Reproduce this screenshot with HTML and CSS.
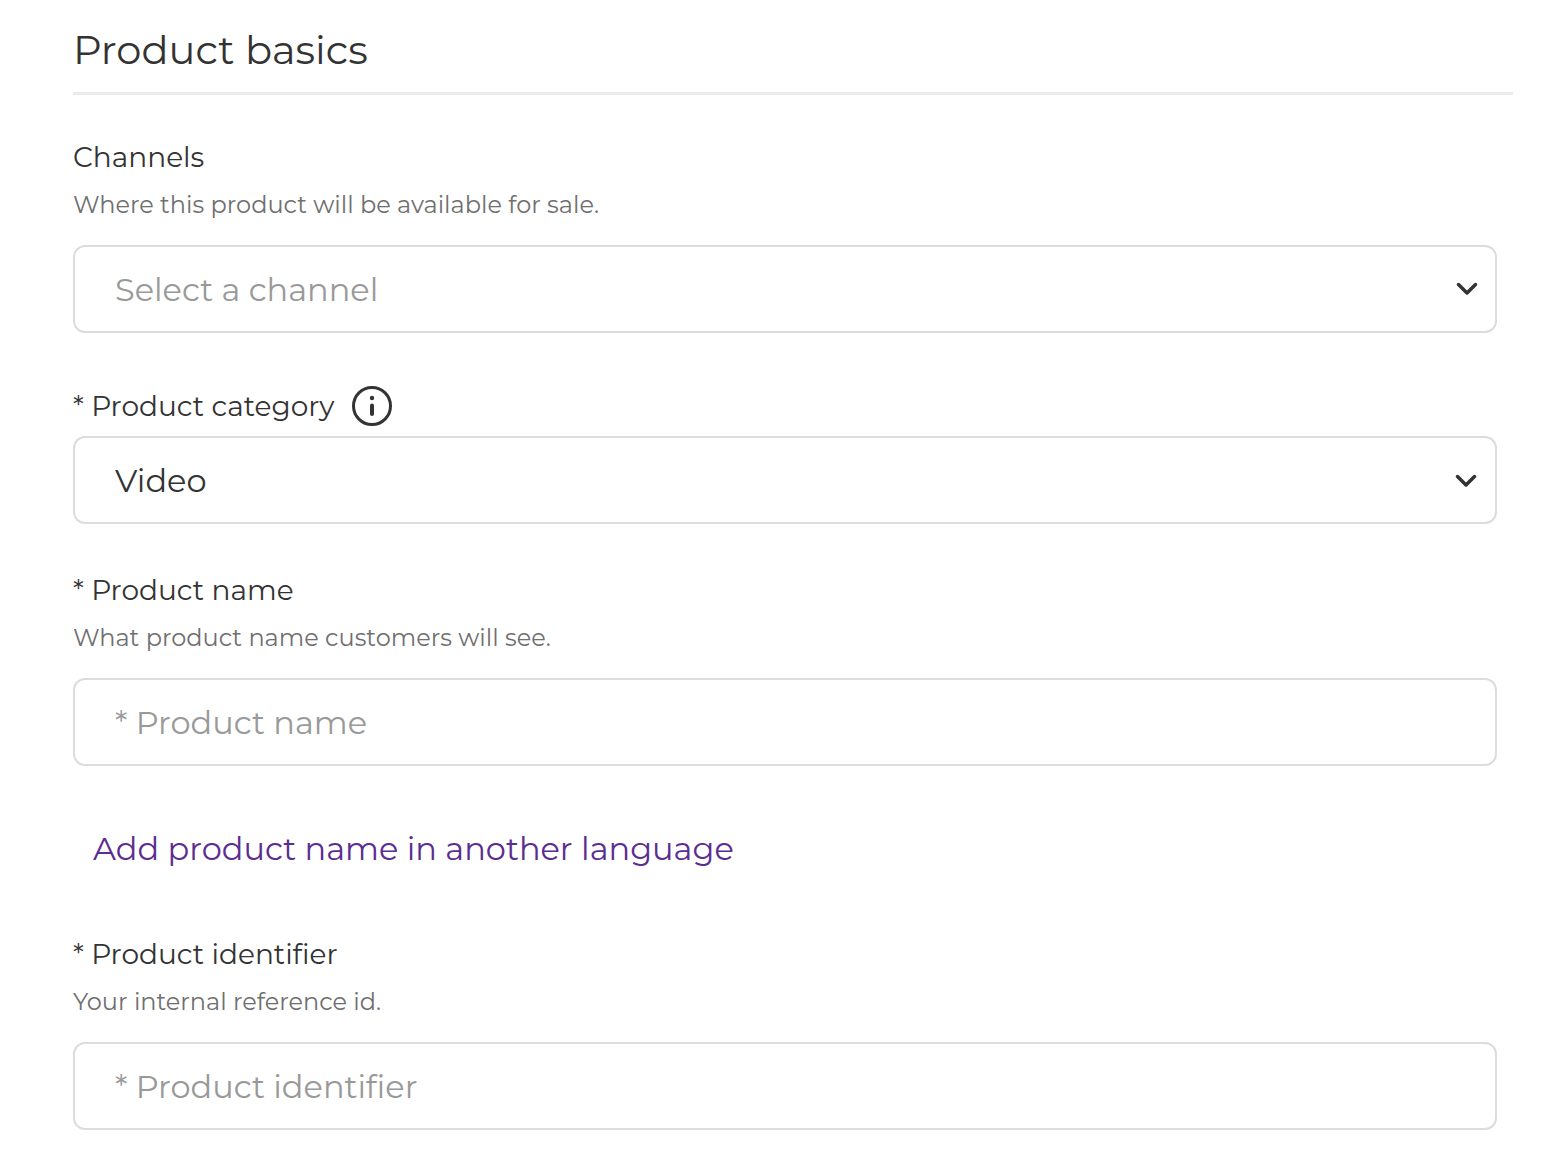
FILE: index.html
```html
<!DOCTYPE html>
<html lang="en">
<head>
<meta charset="utf-8">
<meta name="viewport" content="width=device-width, initial-scale=1">
<title>Product basics</title>
<link rel="stylesheet" href="styles.css">
</head>
<body>
<form class="product-form">
  <h1 class="section-title">Product basics</h1>

  <div class="field">
    <label class="label" for="channels">Channels</label>
    <p class="hint" id="channels-hint">Where this product will be available for sale.</p>
    <div class="select-box">
      <select class="control is-empty" id="channels" aria-describedby="channels-hint">
        <option value="">Select a channel</option>
      </select>
      <svg class="chevron" viewBox="0 0 24 24" aria-hidden="true"><path d="M3.500 7.500l8.500 8.500L20.500 7.500"/></svg>
    </div>
  </div>

  <div class="field">
    <div class="label-row">
      <label class="label" for="category">* Product category</label>
      <button class="info" type="button" aria-label="About product category">
        <svg class="info-icon" viewBox="0 0 40 40" aria-hidden="true"><circle class="ring" cx="20" cy="20" r="18.500"/><circle cx="20" cy="12" r="2.200"/><path class="stem" d="M20 19.500v8.500"/></svg>
      </button>
    </div>
    <div class="select-box">
      <select class="control" id="category">
        <option>Video</option>
      </select>
      <svg class="chevron" viewBox="0 0 24 24" aria-hidden="true"><path d="M2.500 8.500l8.500 8.500L19.500 8.500"/></svg>
    </div>
  </div>

  <div class="field">
    <label class="label" for="name">* Product name</label>
    <p class="hint" id="name-hint">What product name customers will see.</p>
    <input class="control" id="name" type="text" placeholder="* Product name" aria-describedby="name-hint">
  </div>

  <button class="add-language" type="button">Add product name in another language</button>

  <div class="field">
    <label class="label" for="identifier">* Product identifier</label>
    <p class="hint" id="identifier-hint">Your internal reference id.</p>
    <input class="control" id="identifier" type="text" placeholder="* Product identifier" aria-describedby="identifier-hint">
  </div>
</form>
</body>
</html>
```

FILE: styles.css
```css
* {
  box-sizing: border-box;
}

body {
  margin: 0;
  background: #fff;
  color: #333;
  font-family: Gotham, Montserrat, "Noto Sans", sans-serif;
}

.product-form {
  padding: 20px 47px 44px 73px;
}

.section-title {
  margin: 0 0 44px;
  padding-bottom: 12px;
  border-bottom: 3px solid #ebebeb;
  font-size: 40px;
  line-height: 60px;
  font-weight: 400;
}

.field {
  margin: 0 16px 48px 0;
}

.field:last-child {
  margin-bottom: 0;
}

.label {
  display: block;
  font-size: 28px;
  line-height: 36px;
}

.hint {
  margin: 10px 0 20px;
  color: #6f6f6f;
  font-size: 24px;
  line-height: 40px;
}

.label-row {
  display: flex;
  align-items: center;
  gap: 18px;
  padding: 5px 0 10px;
}

.info {
  display: flex;
  padding: 0;
  border: 0;
  background: none;
  color: inherit;
}

.info-icon {
  width: 40px;
  height: 40px;
  fill: currentColor;
}

.ring,
.stem {
  fill: none;
  stroke: currentColor;
  stroke-width: 3;
  stroke-linecap: round;
}

.stem {
  stroke-width: 4;
}

.select-box {
  display: grid;
  align-items: center;
}

.select-box > * {
  grid-area: 1 / 1;
}

.chevron {
  justify-self: end;
  width: 24px;
  height: 24px;
  margin-right: 18px;
  fill: none;
  stroke: #333;
  stroke-width: 3.5;
  stroke-linecap: round;
  stroke-linejoin: round;
  pointer-events: none;
}

.control {
  display: block;
  width: 100%;
  height: 88px;
  padding: 0 40px;
  border: 2px solid #dcdcdc;
  border-radius: 12px;
  background: #fff;
  color: #333;
  font: inherit;
  font-size: 32px;
  appearance: none;
}

.control::placeholder,
.is-empty {
  color: #999;
  opacity: 1;
}

.add-language {
  display: block;
  margin: 60px 0 64px;
  padding: 0 20px;
  border: 0;
  background: none;
  color: #5c2d91;
  font: inherit;
  font-size: 32px;
  line-height: 46px;
}
```
